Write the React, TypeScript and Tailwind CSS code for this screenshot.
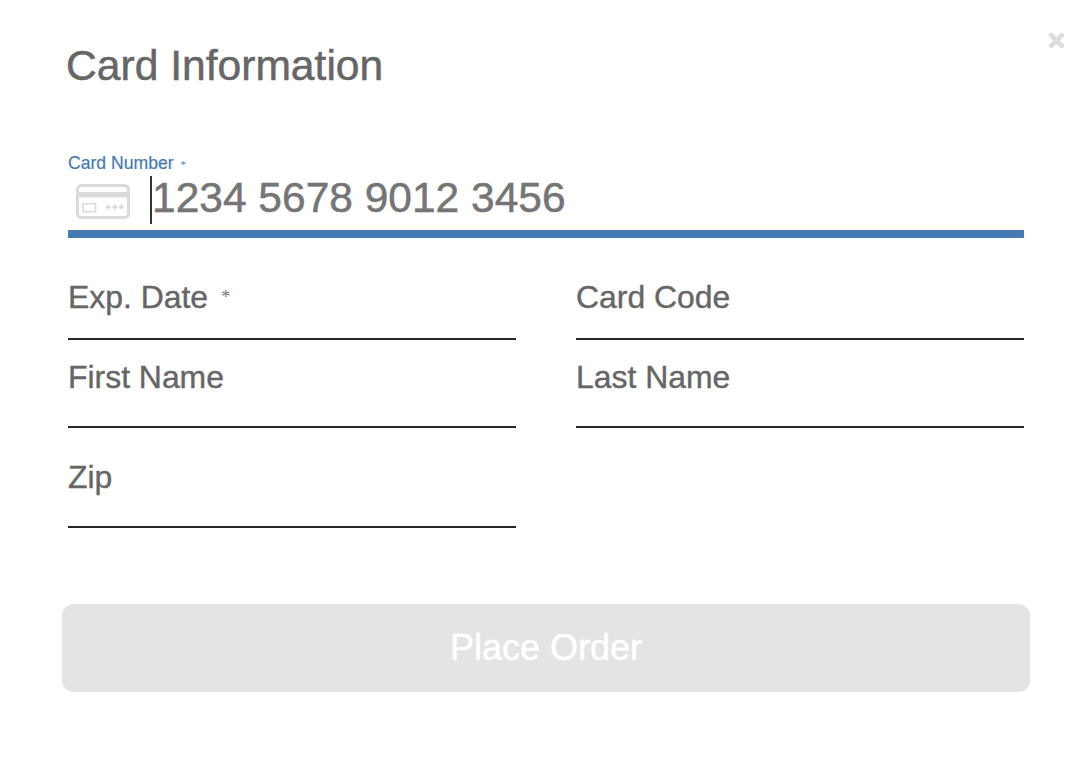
import { ReactNode } from "react";

function Field({
  label,
  required,
  className,
}: {
  label: string;
  required?: boolean;
  className: string;
}) {
  return (
    <div
      className={`w-[448px] flex flex-col justify-end border-b-2 border-[#282828] ${className}`}
    >
      <label className="flex items-center text-[31.9px] leading-10 text-[#666666] [-webkit-text-stroke:0.4px]">
        {label}
        {required && (
          <span className="ml-[13px] h-10 font-['Liberation_Serif',serif] text-[19px] leading-[40px] text-[#777777] [-webkit-text-stroke:0px]">
            *
          </span>
        )}
      </label>
    </div>
  );
}

function Row({ children }: { children: ReactNode }) {
  return <div className="flex justify-between">{children}</div>;
}

function CardIcon() {
  return (
    <svg width="54" height="36" viewBox="0 0 54 36" fill="none">
      <rect x="1.5" y="1.5" width="51" height="32" rx="4" stroke="#d9dadc" strokeWidth="3" />
      <rect x="1" y="8" width="52" height="5.5" fill="#d9dadc" />
      <rect x="7" y="19.7" width="12.5" height="8" stroke="#d9dadc" strokeWidth="1.6" />
      <path
        d="M29.8 23h5M32.3 20.5v5M36.3 23h5M38.8 20.5v5M42.8 23h5M45.3 20.5v5"
        stroke="#d9dadc"
        strokeWidth="2"
      />
    </svg>
  );
}

export default function App() {
  return (
    <main className="relative w-[1092px] h-[770px] bg-white px-[62px] pt-10 font-['Liberation_Sans',Arial,sans-serif] overflow-hidden">
      <button className="absolute left-[1048px] top-[32px]" aria-label="Close">
        <svg width="17" height="17" viewBox="0 0 17 17" fill="none">
          <path
            d="M3.3 3.3l10.4 10.4M13.7 3.3L3.3 13.7"
            stroke="#dddddd"
            strokeWidth="4.9"
            strokeLinecap="round"
          />
        </svg>
      </button>

      <h1 className="pl-1 text-[42.6px] leading-[50px] text-[#666666] [-webkit-text-stroke:0.5px]">
        Card Information
      </h1>

      <form className="mt-[63px] mx-[6px]">
        <label className="flex h-5 text-[17.6px] leading-5 text-[#467ab4] [-webkit-text-stroke:0.2px]">
          Card Number
          <span className="ml-[7px] font-['Liberation_Serif',serif] text-[11px] leading-[23px] [-webkit-text-stroke:0px]">
            *
          </span>
        </label>
        <div className="flex h-[65px] border-b-8 border-[#467ab4]">
          <div className="w-[82px] pl-2 pt-[11px]">
            <CardIcon />
          </div>
          <div className="mt-[3px] h-12 w-[2px] bg-[#333333]" />
          <span className="pt-px text-[42.5px] leading-[48px] text-[#757575] [-webkit-text-stroke:0.5px]">
            1234 5678 9012 3456
          </span>
        </div>

        <Row>
          <Field label="Exp. Date" required className="h-[102px] pb-[21px]" />
          <Field label="Card Code" className="h-[102px] pb-[21px]" />
        </Row>
        <Row>
          <Field label="First Name" className="h-[88px] pb-[29px]" />
          <Field label="Last Name" className="h-[88px] pb-[29px]" />
        </Row>
        <Row>
          <Field label="Zip" className="h-[100px] pb-[29px]" />
        </Row>
      </form>

      <button className="mt-[76px] h-[88px] w-full rounded-xl bg-[#e2e5e4] text-4xl text-white [-webkit-text-stroke:0.5px]">
        Place Order
      </button>
    </main>
  );
}
